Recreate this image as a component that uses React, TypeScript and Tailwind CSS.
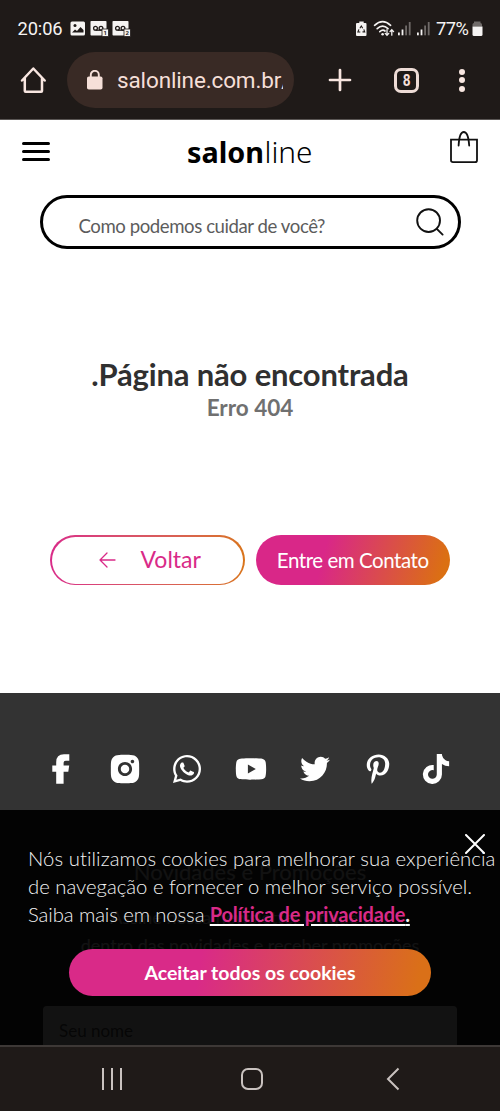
import type { ReactNode } from "react";
import {
  FaWhatsapp,
  FaYoutube,
  FaTwitter,
  FaPinterestP,
  FaTiktok,
} from "react-icons/fa";
import { RiInstagramFill } from "react-icons/ri";

function FacebookIcon() {
  return (
    <svg width="18" height="30" viewBox="0 0 18 30" fill="currentColor">
      <path d="M4.2 29.7V17.8H.3v-6.2h3.9V8.2Q4.2.3 12 .3h5.3v6.5h-3.6q-2.1 0-2.1 2v2.8h5.6l-.9 6.2h-4.7v11.9z" />
    </svg>
  );
}

const socialLinks: { name: string; className: string; icon: ReactNode }[] = [
  { name: "Facebook", className: "w-[30px]", icon: <FacebookIcon /> },
  { name: "Instagram", className: "w-[33px]", icon: <RiInstagramFill size={34} className="shrink-0" /> },
  { name: "WhatsApp", className: "w-[28px]", icon: <FaWhatsapp size={32} className="shrink-0" /> },
  { name: "YouTube", className: "w-[36px]", icon: <FaYoutube size={32} /> },
  { name: "Twitter", className: "w-[28px]", icon: <FaTwitter size={30} className="shrink-0" /> },
  { name: "Pinterest", className: "w-[34px]", icon: <FaPinterestP size={30} /> },
  { name: "TikTok", className: "w-[18px]", icon: <FaTiktok size={30} className="shrink-0" /> },
];

function PhoneStatusIcons() {
  return (
    <svg width="62" height="18" viewBox="0 0 62 18" fill="#f5f3f2">
      <rect x="0.5" y="1.5" width="14.5" height="14" rx="1.5" />
      <circle cx="5" cy="5.5" r="1.5" fill="#1f1a18" />
      <path d="M2 12.5l3-3 2 1.5 3.5-4 3 3v2.5z" fill="#1f1a18" />
      {[20.5, 42.5].map((x, i) => (
        <g key={x} transform={`translate(${x} 1)`}>
          <rect width="16" height="14.5" rx="0.8" />
          <g fill="none" stroke="#1f1a18" strokeWidth="1.3">
            <circle cx="5" cy="7.3" r="1.9" />
            <path d="M5 9.2h6" />
            <circle cx="10.5" cy="7.3" r="1.9" />
          </g>
          <rect x="11.5" y="8" width="6.5" height="7.5" stroke="#1f1a18" strokeWidth="0.8" />
          <text
            x="14.8"
            y="13.8"
            textAnchor="middle"
            fill="#1f1a18"
            className="font-[Roboto] text-[6px] font-bold"
          >
            {i + 1}
          </text>
        </g>
      ))}
    </svg>
  );
}

function SignalIcons() {
  return (
    <svg width="76" height="18" viewBox="0 0 76 18" fill="#f5f3f2">
      <path d="M1.5 3h1.8V1.4h4.4V3H9.5q1 0 1 1v11q0 1-1 1H1q-1 0-1-1V4q0-1 1-1z" />
      <g fill="none" stroke="#1f1a18" strokeWidth="1.1">
        <path d="M3.9 8.2l1.4-2.2 1.4 2.2M7.8 9.4l.9 2.5H6.5M4.3 12H1.9l1-2.6" />
      </g>
      <g fill="none" stroke="#f5f3f2" strokeWidth="1.7" strokeLinecap="round">
        <path d="M18.6 5.3q8-7.2 16 0" />
        <path d="M21.2 8.6q5.4-4.8 10.8 0" />
        <path d="M23.8 11.6q3-2.4 5.2-.6" />
        <path d="M31 9.6v5.6M29.2 13.4l1.8 1.9 1.8-1.9M35.8 15.2V9.8M34 11.6l1.8-1.9 1.8 1.9" strokeWidth="1.3" />
      </g>
      <circle cx="26.6" cy="14.2" r="1.3" />
      {[42, 61].map((x) => (
        <g key={x} transform={`translate(${x} 0)`}>
          <rect x="0" y="12.5" width="1.8" height="2.8" />
          <rect x="3.6" y="9.5" width="1.8" height="5.8" />
          <rect x="7.2" y="5.5" width="1.8" height="9.8" fill="#6f6a68" />
          <rect x="10.8" y="2" width="1.8" height="13.3" fill="#6f6a68" />
        </g>
      ))}
    </svg>
  );
}

function StatusBar() {
  return (
    <div className="flex h-[52px] items-center pt-[5px] pl-[17.5px] pr-[17px] font-[Roboto] text-[18.3px] text-[#f5f3f2]">
      <span className="w-[46px] tracking-[-0.1px]">20:06</span>
      <div className="ml-[6.5px]">
        <PhoneStatusIcons />
      </div>
      <div className="ml-auto flex items-center">
        <SignalIcons />
        <span className="ml-[4px] w-[34px] tracking-[-0.5px]">77%</span>
        <svg className="ml-[2px]" width="11" height="18" viewBox="0 0 11 18">
          <path d="M0.5 4.5q0-1.5 1.5-1.5V1.5h6.5V3q1.5 0 1.5 1.5v2H.5z" fill="#6f6a68" />
          <path d="M.5 6.5H10.5v8q0 1.5-1.5 1.5H2q-1.5 0-1.5-1.5z" fill="#f5f3f2" />
        </svg>
      </div>
    </div>
  );
}

function BrowserBar() {
  return (
    <div className="flex h-[56px] items-center pl-[20px] font-[Roboto] text-[#f5dfd8]">
      <svg width="27" height="28" viewBox="0 0 27 28" fill="none" stroke="#f8e6e0" strokeWidth="2.5" strokeLinejoin="round" strokeLinecap="round">
        <path d="M2 14.5L13.3 2.5 24.7 14.5M4.8 12v13q0 .8.8.8h15.6q.8 0 .8-.8V12" />
      </svg>
      <div className="ml-[20px] flex h-[56px] w-[227px] items-center rounded-full bg-[#392a25] pl-[20px]">
        <svg width="16" height="20" viewBox="0 0 16 20">
          <rect y="6.5" width="15.5" height="13" rx="1.8" fill="#f5dfd8" />
          <path d="M3.8 7V4.8a4 4 0 018 0V7" fill="none" stroke="#f5dfd8" strokeWidth="1.9" />
        </svg>
        <span className="ml-[14px] w-[166px] overflow-hidden whitespace-nowrap pt-px text-[22.5px] tracking-[-0.13px]">
          salonline.com.br/
        </span>
      </div>
      <svg className="ml-[34px]" width="24" height="24" viewBox="0 0 24 24" stroke="#f8e6e0" strokeWidth="2.7" strokeLinecap="round">
        <path d="M12 2v20M2 12h20" />
      </svg>
      <div className="ml-[42px] flex h-[25px] w-[25px] items-center justify-center rounded-[7px] border-[3px] border-[#eedcd6] text-[16px] leading-none font-bold">
        <span className="scale-x-85 pt-px">8</span>
      </div>
      <div className="ml-[40px] flex flex-col gap-[2.5px]">
        <i className="h-[6px] w-[6px] rounded-full bg-[#f8e6e0]" />
        <i className="h-[6px] w-[6px] rounded-full bg-[#f8e6e0]" />
        <i className="h-[6px] w-[6px] rounded-full bg-[#f8e6e0]" />
      </div>
    </div>
  );
}

function SiteHeader() {
  return (
    <header className="flex h-[75px] items-start justify-between pl-[22px] pr-[22px]">
      <button aria-label="Menu" className="mt-[22px] flex w-7 flex-col gap-[5.4px]">
        <i className="h-[2.8px] rounded-full bg-black" />
        <i className="h-[2.8px] rounded-full bg-black" />
        <i className="h-[2.8px] rounded-full bg-black" />
      </button>
      <svg className="mt-[8px]" width="128" height="48" viewBox="0 0 128 48">
        <text x="1" y="34.5" textLength="77" lengthAdjust="spacingAndGlyphs" className="font-['Noto_Sans'] text-[28.5px] font-bold">
          salon
        </text>
        <text x="78.5" y="34.5" textLength="48" lengthAdjust="spacingAndGlyphs" className="font-['Noto_Sans'] text-[28.5px] font-light">
          line
        </text>
      </svg>
      <svg className="mt-[10px]" width="28" height="34" viewBox="0 0 28 34" fill="none" stroke="#111" strokeWidth="1.8" strokeLinecap="round">
        <path d="M1 9.6h26v20.6q0 2-2 2H3q-2 0-2-2z" />
        <path d="M8.6 15.5Q9.3 2 13.8 2t5.4 13.5" />
      </svg>
    </header>
  );
}

function ErrorPage() {
  return (
    <main className="flex h-[573px] flex-col bg-white">
      <SiteHeader />
      <div className="mx-[40px] flex h-[54px] w-[421px] shrink-0 items-center rounded-full border-[3px] border-black pl-[35.5px] pr-[14.5px]">
        <span className="flex-1 pt-[9px] text-[18.6px] tracking-[-0.43px] text-[#5c5c5c]">Como podemos cuidar de você?</span>
        <svg width="28" height="28" viewBox="0 0 28 28" fill="none" stroke="#111" strokeWidth="1.9" strokeLinecap="round">
          <circle cx="12.6" cy="12.6" r="11.4" />
          <path d="M20.8 20.8L26.6 26.6" />
        </svg>
      </div>
      <div className="mt-[106px] text-center font-bold">
        <h1 className="text-[31px] leading-[38px] tracking-[-0.17px] text-[#303030]">.Página não encontrada</h1>
        <p className="pt-px text-[22.5px] leading-[28px] text-[#707070]">Erro 404</p>
      </div>
      <div className="mt-[113px] flex gap-[11px] pl-[50px]">
        <button className="h-[50px] w-[194.5px] rounded-full bg-linear-to-r from-[#d92a88] to-[#d97418] p-[1.5px]">
          <span className="flex h-full items-center rounded-full bg-white pb-px pl-[47px] text-[23px] text-[#d92a88]">
            <svg className="mr-[25px]" width="17" height="16" viewBox="0 0 17 16" fill="none" stroke="#d92a88" strokeWidth="1.3" strokeLinecap="round" strokeLinejoin="round">
              <path d="M16 8H1M8 1L1 8l7 7" />
            </svg>
            Voltar
          </span>
        </button>
        <button className="h-[50px] w-[194.5px] rounded-full bg-[linear-gradient(105deg,#d92788_0%,#d92788_35%,#db7012_95%)] text-[20.5px] tracking-[-0.45px] text-white">
          Entre em Contato
        </button>
      </div>
    </main>
  );
}

function CookieBanner() {
  return (
    <div className="absolute inset-x-0 bottom-0 h-[235px] bg-black/93 pt-[34px] text-white">
      <svg className="absolute right-[15px] top-[24px]" width="20" height="20" viewBox="0 0 20 20" stroke="#fff" strokeWidth="2" strokeLinecap="round">
        <path d="M1 1l18 18M19 1L1 19" />
      </svg>
      <p className="pl-[28px] text-[20.3px] leading-[28px] font-light whitespace-nowrap text-[#f2f2f2]">
        <span className="tracking-[0.07px]">Nós utilizamos cookies para melhorar sua experiência</span>
        <br />
        de navegação e fornecer o melhor serviço possível.
        <br />
        <span className="tracking-[-0.1px]">Saiba mais em nossa </span>
        <a className="text-[20px] font-bold tracking-[-0.2px] underline decoration-white decoration-2 underline-offset-[2px]">
          <span className="text-[#d92a88]">Política de privacidade</span>.
        </a>
      </p>
      <button className="mt-[21px] ml-[69px] h-[47px] w-[362px] rounded-full bg-[linear-gradient(100deg,#d92a88_0%,#d92a88_36%,#da7018_96%)] text-[19.5px] font-bold">
        Aceitar todos os cookies
      </button>
    </div>
  );
}

function SiteFooter() {
  return (
    <footer className="relative h-[352px] overflow-hidden bg-[#333] text-white">
      <div className="flex h-[117px] items-center gap-[32px] pt-[34px] pl-[46px]">
        {socialLinks.map((link) => (
          <a key={link.name} aria-label={link.name} className={`flex justify-center ${link.className}`}>
            {link.icon}
          </a>
        ))}
      </div>
      <div className="pt-[46px] text-center">
        <h2 className="text-[22px] leading-[32px]">Novidades e Promoções</h2>
        <p className="mt-[15px] text-[18px] leading-[28px]">
          Assine nossa newsletter e fique por
          <br />
          dentro das novidades e receber promoções
        </p>
      </div>
      <div className="mx-[43px] mt-[47px] h-[60px] rounded-[4px] bg-white pt-[12px] pl-[16px] text-[17px] text-[#555]">
        Seu nome
      </div>
      <CookieBanner />
    </footer>
  );
}

function NavigationBar() {
  return (
    <nav className="flex h-[66px] items-center border-t-2 border-[#3d3836] bg-[#1f1a18] pl-[102px] text-[#c9c2bf]">
      <div className="flex gap-[7px]">
        <i className="h-[22px] w-[2px] bg-[#c9c2bf]" />
        <i className="h-[22px] w-[2px] bg-[#c9c2bf]" />
        <i className="h-[22px] w-[2px] bg-[#c9c2bf]" />
      </div>
      <div className="ml-[119px] h-[22px] w-[22px] rounded-[7px] border-2 border-[#c9c2bf]" />
      <svg className="ml-[123px]" width="14" height="24" viewBox="0 0 14 24" fill="none" stroke="#c9c2bf" strokeWidth="2">
        <path d="M12.5 1.5L2 12l10.5 10.5" />
      </svg>
    </nav>
  );
}

export default function App() {
  return (
    <div className="flex h-[1111px] w-[500px] flex-col overflow-hidden bg-white font-[Lato,sans-serif] [font-variant-ligatures:none]">
      <div className="h-[120px] border-b border-[#5a5654] bg-[#1f1a18]">
        <StatusBar />
        <BrowserBar />
      </div>
      <ErrorPage />
      <SiteFooter />
      <NavigationBar />
    </div>
  );
}
